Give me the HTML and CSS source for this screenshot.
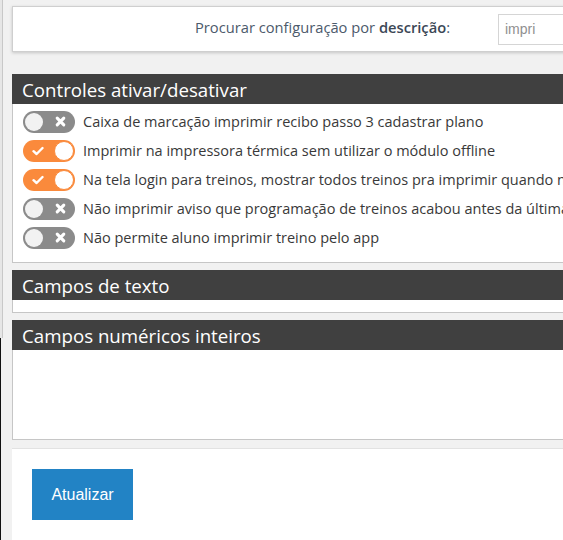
FILE: index.html
```html
<!DOCTYPE html>
<html lang="pt-BR">
  <head>
    <meta charset="UTF-8" />
    <meta name="viewport" content="width=device-width, initial-scale=1.0" />
    <title>Configurações</title>
    <link rel="stylesheet" href="styles.css">
  </head>
  <body>
    <div class="page">
      <div class="search-box">
        <label for="busca">Procurar configuração por <b>descrição</b>:</label>
        <input type="text" id="busca" value="impri" />
      </div>

      <div class="section">
        <h2>Controles ativar/desativar</h2>
        <ul class="section-body toggles">
          <li>
            <span class="switch">
              <svg class="ico-x" viewBox="0 0 10 10"><path d="M2 2L8 8M8 2L2 8" /></svg>
              <span class="knob"></span>
            </span>
            Caixa de marcação imprimir recibo passo 3 cadastrar plano
          </li>
          <li>
            <span class="switch on">
              <svg class="ico-check" viewBox="0 0 12 10"><path d="M1.5 5.2L4.6 8L10.5 2" /></svg>
              <span class="knob"></span>
            </span>
            Imprimir na impressora térmica sem utilizar o módulo offline
          </li>
          <li>
            <span class="switch on">
              <svg class="ico-check" viewBox="0 0 12 10"><path d="M1.5 5.2L4.6 8L10.5 2" /></svg>
              <span class="knob"></span>
            </span>
            Na tela login para treinos, mostrar todos treinos pra imprimir quando nenhum estiver selecionado
          </li>
          <li>
            <span class="switch">
              <svg class="ico-x" viewBox="0 0 10 10"><path d="M2 2L8 8M8 2L2 8" /></svg>
              <span class="knob"></span>
            </span>
            Não imprimir aviso que programação de treinos acabou antes da última aula
          </li>
          <li>
            <span class="switch">
              <svg class="ico-x" viewBox="0 0 10 10"><path d="M2 2L8 8M8 2L2 8" /></svg>
              <span class="knob"></span>
            </span>
            Não permite aluno imprimir treino pelo app
          </li>
        </ul>
      </div>

      <div class="section">
        <h2>Campos de texto</h2>
        <div class="section-body empty-sm"></div>
      </div>

      <div class="section">
        <h2>Campos numéricos inteiros</h2>
        <div class="section-body empty-lg"></div>
      </div>

      <div class="actions">
        <button type="button">Atualizar</button>
      </div>
    </div>
  </body>
</html>
```

FILE: styles.css
```css
html {
  overflow: hidden;
}

body {
  margin: 0;
  font-family: "Open Sans", Arial, sans-serif;
  font-size: 14.5px;
  color: #393939;
  background-color: #f1f1f1;
  background-image: linear-gradient(#e6e6e6, #e6e6e6),
    linear-gradient(#c8c8c8, #c8c8c8),
    linear-gradient(#111, #111);
  background-repeat: no-repeat;
  background-size: 2px 338px, 1px 338px, 1px 100%;
  background-position: 0 0, 2px 0, 0 338px;
}

.page {
  width: 640px;
  padding: 6px 0 0 12px;
}

.search-box {
  display: flex;
  align-items: center;
  justify-content: flex-end;
  height: 44px;
  background: #fff;
  border: 1px solid #cfcfcf;
  box-shadow: 0 1px 3px rgba(0, 0, 0, 0.18);
  padding-right: 12px;
  margin-bottom: 22px;
}

.search-box label {
  color: #4c5a6b;
  font-size: 14.7px;
  margin-right: 48px;
  margin-top: -5px;
}

.search-box label b {
  font-weight: 600;
  color: #3b4756;
}

.search-box input {
  width: 141px;
  height: 31px;
  box-sizing: border-box;
  border: 1px solid #d5d5d5;
  padding: 4px 6px;
  font-family: "Liberation Sans", Arial, sans-serif;
  font-size: 14px;
  color: #909090;
}

.section {
  margin-bottom: 7px;
}

.section h2 {
  margin: 0;
  height: 30px;
  line-height: 31px;
  background: #404040;
  color: #fff;
  font-size: 18.7px;
  font-weight: 400;
  padding-left: 10px;
}

.section-body {
  background: #fff;
  border: 1px solid #c6c6c6;
  border-top: 0;
}

.toggles {
  list-style: none;
  margin: 0;
  padding: 3px 10px 10px;
}

.toggles li {
  display: flex;
  align-items: center;
  height: 29px;
  white-space: nowrap;
}

.switch {
  display: flex;
  align-items: center;
  justify-content: space-between;
  flex-direction: row-reverse;
  flex-shrink: 0;
  width: 52px;
  height: 22px;
  box-sizing: border-box;
  border-radius: 11px;
  background: #8b8b8b;
  padding: 0 2px;
  margin-right: 8px;
}

.switch .knob {
  width: 18px;
  height: 18px;
  border-radius: 50%;
  background: #f2f2f2;
}

.switch svg {
  fill: none;
  stroke: #fff;
  stroke-linecap: round;
  stroke-linejoin: round;
}

.ico-x {
  width: 11px;
  height: 11px;
  stroke-width: 2.8;
  margin-right: 7px;
}

.switch.on {
  background: #fa8a3c;
  flex-direction: row;
  padding: 0 1px 0 0;
}

.switch.on .knob {
  background: #fff;
  border: 1px solid #fa8a3c;
}

.ico-check {
  width: 12px;
  height: 10px;
  stroke-width: 2.4;
  margin-left: 9px;
}

.empty-sm {
  height: 12px;
}

.empty-lg {
  height: 89px;
}

.actions {
  margin-top: 8px;
  background: #fff;
  border-top: 1px solid #e2e2e2;
  padding: 20px 20px 30px;
}

.actions button {
  width: 101px;
  height: 51px;
  border: 0;
  background: #2283c5;
  color: #fff;
  font-family: "Liberation Sans", Arial, sans-serif;
  font-size: 16px;
  cursor: pointer;
}
```
